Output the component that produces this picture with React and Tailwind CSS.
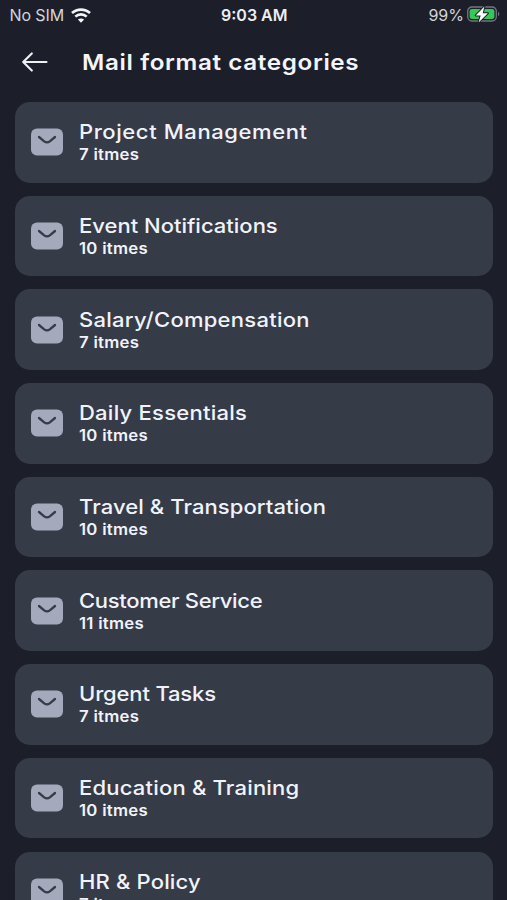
const categories = [
  { name: 'Project Management', count: 7, tracking: 'tracking-[0.53px]' },
  { name: 'Event Notifications', count: 10, tracking: 'tracking-[0px]' },
  { name: 'Salary/Compensation', count: 7, tracking: 'tracking-[0.24px]' },
  { name: 'Daily Essentials', count: 10, tracking: 'tracking-[0.22px]' },
  { name: 'Travel & Transportation', count: 10, tracking: 'tracking-[0.08px]' },
  { name: 'Customer Service', count: 11, tracking: 'tracking-[-0.29px]' },
  { name: 'Urgent Tasks', count: 7, tracking: 'tracking-[-0.14px]' },
  { name: 'Education & Training', count: 10, tracking: 'tracking-[0.18px]' },
  { name: 'HR & Policy', count: 7, tracking: 'tracking-[0.15px]' },
];

function WifiIcon() {
  return (
    <svg viewBox="0 0 20 15" className="w-5 h-[15px]" fill="none" stroke="#f4f5f8">
      <path d="M1 5.1C6 .4 14 .4 19 5.1" strokeWidth="2.7" />
      <path d="M4.3 8.6c3.2-3 8.2-3 11.4 0" strokeWidth="2.6" />
      <path d="M10 14.7l-3.1-3.1c1.7-1.6 4.5-1.6 6.2 0z" fill="#f4f5f8" stroke="none" />
    </svg>
  );
}

function BatteryIcon() {
  return (
    <svg viewBox="0 0 33 18" className="w-[33px] h-[18px]">
      <rect x="0.7" y="1" width="28.6" height="14" rx="4.2" fill="none" stroke="#74777f" strokeWidth="1.3" />
      <rect x="2.6" y="2.9" width="24.8" height="10.2" rx="2.4" fill="#35c759" />
      <path d="M31 5.8c1.8.7 1.8 3.7 0 4.4z" fill="#74777f" />
      <path
        d="M17.4.6 8.7 9.4h5l-2.1 7 9.3-9.2h-5.2z"
        fill="#fff"
        stroke="#1c1f2a"
        strokeWidth="2"
        strokeLinejoin="round"
        paintOrder="stroke"
      />
    </svg>
  );
}

function MailIcon() {
  return (
    <svg viewBox="0 0 32 28" className="w-8 h-7 shrink-0">
      <rect x="0" y="0.4" width="32" height="27.2" rx="6" fill="#a4aabb" />
      <path
        d="M8 9l5.2 4.3c1.7 1.3 3.9 1.3 5.6 0L24 9"
        fill="none"
        stroke="#363b48"
        strokeWidth="2.3"
        strokeLinecap="round"
        strokeLinejoin="round"
      />
    </svg>
  );
}

function StatusBar() {
  return (
    <div className="grid grid-cols-[1fr_auto_1fr] items-center h-[30px] pl-[9.5px] pr-[7px] text-[16px] leading-[30px] text-[#d3d5db]">
      <div className="flex items-center gap-[7px]">
        <span className="tracking-[-0.1px]">No SIM</span>
        <WifiIcon />
      </div>
      <span className="font-semibold text-[#eceef2] -ml-px">9:03 AM</span>
      <div className="flex items-center justify-end gap-[3px]">
        <span>99%</span>
        <BatteryIcon />
      </div>
    </div>
  );
}

function CategoryCard({ category }) {
  return (
    <div className="flex items-center h-[80.5px] shrink-0 pl-[16.5px] gap-4 rounded-[15px] bg-[#363b48] text-[#f1f3fa]">
      <MailIcon />
      <div className="pt-px whitespace-nowrap">
        <p className={`text-[20px] leading-6 font-medium origin-left scale-x-110 ${category.tracking}`}>{category.name}</p>
        <p className="text-[15.5px] leading-[21px] font-semibold origin-left scale-x-[1.08] tracking-[0.25px]">{category.count} itmes</p>
      </div>
    </div>
  );
}

export default function App() {
  return (
    <div className="h-[900px] overflow-hidden bg-[#1c1f2a] font-['Inter',sans-serif]">
      <StatusBar />
      <header className="flex items-center h-[72px] pl-[22px] pb-2 gap-[34px]">
        <svg viewBox="0 0 26 20" className="w-[26px] h-5" fill="none" stroke="#eef0f6" strokeWidth="2.1" strokeLinecap="round" strokeLinejoin="round">
          <path d="M24.5 10H1.2M9.8 1.4L1.2 10l8.6 8.6" />
        </svg>
        <h1 className="text-[22px] leading-7 font-semibold text-[#f4f5fa] origin-left scale-x-110 tracking-[0.58px]">Mail format categories</h1>
      </header>
      <main className="flex flex-col gap-[13.2px] pl-[14.5px] pr-[14px]">
        {categories.map(category => (
          <CategoryCard key={category.name} category={category} />
        ))}
      </main>
    </div>
  );
}
